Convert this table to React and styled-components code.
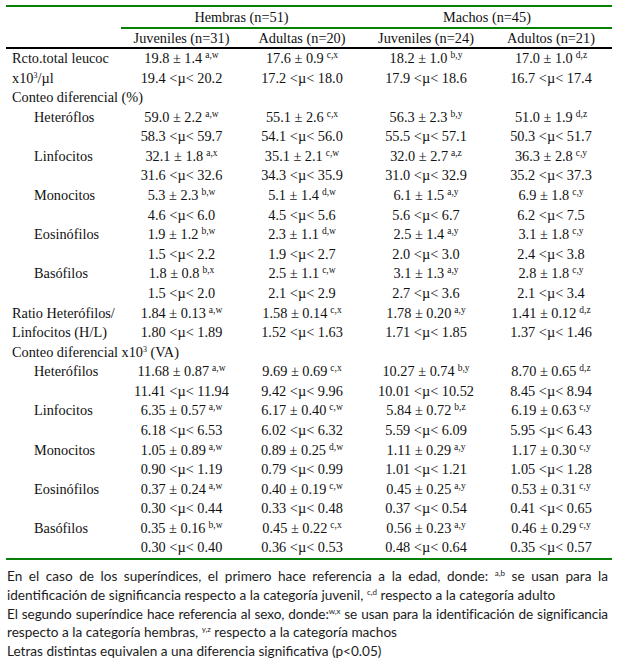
import React from "react";
import styled, { createGlobalStyle } from "styled-components";

const Global = createGlobalStyle`
  html, body { margin: 0; padding: 0; background: #ffffff; }
  body { font-family: "Liberation Serif", "Times New Roman", serif; color: #111; }
`;

const GREEN = "#088008";
const COLS = "115px 121px 120px 128px 122px";
const ROW_H = "19.58px";

const Page = styled.div`
  width: 619px;
  height: 659px;
  padding: 5px 7px 0 6px;
  box-sizing: border-box;
  overflow: hidden;
`;

const Table = styled.div`
  width: 606px;
  font-family: "Liberation Serif", "Times New Roman", serif;
  font-size: 14.3px;
  color: #111;
`;

const Rule = styled.div`
  height: 2px;
  background: ${(p) => (p.$black ? "#000" : GREEN)};
  margin-left: ${(p) => p.$indent || 0}px;
`;

const Row = styled.div`
  display: grid;
  grid-template-columns: ${COLS};
  height: ${(p) => p.$h || ROW_H};
  line-height: ${(p) => p.$h || ROW_H};
  white-space: nowrap;
`;

const GroupHeading = styled.div`
  grid-column: span 2;
  text-align: center;
`;

const HeadCell = styled.div`
  text-align: center;
`;

const Label = styled.div`
  padding-left: ${(p) => (p.$sub ? 28 : 6)}px;
  grid-column: ${(p) => (p.$wide ? "span 5" : "auto")};
`;

const Cell = styled.div`
  text-align: center;
`;

const Sup = styled.sup`
  font-size: 9.5px;
  line-height: 0;
  vertical-align: 5px;
  margin-left: 3px;
`;

const SmallSup = styled.sup`
  font-size: 8px;
  line-height: 0;
  vertical-align: 5px;
`;

const Notes = styled.div`
  margin-top: 7px;
  width: 601px;
  padding-left: 1px;
  font-family: "Lato", "Open Sans", sans-serif;
  font-size: 13.6px;
  color: #1c1c1c;
`;

const NoteLine = styled.div`
  height: 18.8px;
  line-height: 18.8px;
  white-space: nowrap;
  letter-spacing: ${(p) => (p.$tight ? "-0.12px" : "0")};
  text-align: ${(p) => (p.$justify ? "justify" : "left")};
  text-align-last: ${(p) => (p.$justify ? "justify" : "left")};
`;

const MU = "\u00b5";

const groups = [
  {
    label: ["Rcto.total leucoc", <>x10<SmallSup>3</SmallSup>/{MU}l</>],
    sub: false,
    data: [
      ["19.8 ± 1.4", "a,w", "19.4", "20.2"],
      ["17.6 ± 0.9", "c,x", "17.2", "18.0"],
      ["18.2 ± 1.0", "b,y", "17.9", "18.6"],
      ["17.0 ± 1.0", "d,z", "16.7", "17.4"],
    ],
  },
  { heading: "Conteo diferencial (%)" },
  {
    label: ["Heteróflos", ""],
    sub: true,
    data: [
      ["59.0 ± 2.2", "a,w", "58.3", "59.7"],
      ["55.1 ± 2.6", "c,x", "54.1", "56.0"],
      ["56.3 ± 2.3", "b,y", "55.5", "57.1"],
      ["51.0 ± 1.9", "d,z", "50.3", "51.7"],
    ],
  },
  {
    label: ["Linfocitos", ""],
    sub: true,
    data: [
      ["32.1 ± 1.8", "a,x", "31.6", "32.6"],
      ["35.1 ± 2.1", "c,w", "34.3", "35.9"],
      ["32.0 ± 2.7", "a,z", "31.0", "32.9"],
      ["36.3 ± 2.8", "c,y", "35.2", "37.3"],
    ],
  },
  {
    label: ["Monocitos", ""],
    sub: true,
    data: [
      ["5.3 ± 2.3", "b,w", "4.6", "6.0"],
      ["5.1 ± 1.4", "d,w", "4.5", "5.6"],
      ["6.1 ± 1.5", "a,y", "5.6", "6.7"],
      ["6.9 ± 1.8", "c,y", "6.2", "7.5"],
    ],
  },
  {
    label: ["Eosinófilos", ""],
    sub: true,
    data: [
      ["1.9 ± 1.2", "b,w", "1.5", "2.2"],
      ["2.3 ± 1.1", "d,w", "1.9", "2.7"],
      ["2.5 ± 1.4", "a,y", "2.0", "3.0"],
      ["3.1 ± 1.8", "c,y", "2.4", "3.8"],
    ],
  },
  {
    label: ["Basófilos", ""],
    sub: true,
    data: [
      ["1.8 ± 0.8", "b,x", "1.5", "2.0"],
      ["2.5 ± 1.1", "c,w", "2.1", "2.9"],
      ["3.1 ± 1.3", "a,y", "2.7", "3.6"],
      ["2.8 ± 1.8", "c,y", "2.1", "3.4"],
    ],
  },
  {
    label: ["Ratio Heterófilos/", "Linfocitos (H/L)"],
    sub: false,
    data: [
      ["1.84 ± 0.13", "a,w", "1.80", "1.89"],
      ["1.58 ± 0.14", "c,x", "1.52", "1.63"],
      ["1.78 ± 0.20", "a,y", "1.71", "1.85"],
      ["1.41 ± 0.12", "d,z", "1.37", "1.46"],
    ],
  },
  { heading: <>Conteo diferencial x10<SmallSup>3</SmallSup> (VA)</> },
  {
    label: ["Heterófilos", ""],
    sub: true,
    data: [
      ["11.68 ± 0.87", "a,w", "11.41", "11.94"],
      ["9.69 ± 0.69", "c,x", "9.42", "9.96"],
      ["10.27 ± 0.74", "b,y", "10.01", "10.52"],
      ["8.70 ± 0.65", "d,z", "8.45", "8.94"],
    ],
  },
  {
    label: ["Linfocitos", ""],
    sub: true,
    data: [
      ["6.35 ± 0.57", "a,w", "6.18", "6.53"],
      ["6.17 ± 0.40", "c,w", "6.02", "6.32"],
      ["5.84 ± 0.72", "b,z", "5.59", "6.09"],
      ["6.19 ± 0.63", "c,y", "5.95", "6.43"],
    ],
  },
  {
    label: ["Monocitos", ""],
    sub: true,
    data: [
      ["1.05 ± 0.89", "a,w", "0.90", "1.19"],
      ["0.89 ± 0.25", "d,w", "0.79", "0.99"],
      ["1.11 ± 0.29", "a,y", "1.01", "1.21"],
      ["1.17 ± 0.30", "c,y", "1.05", "1.28"],
    ],
  },
  {
    label: ["Eosinófilos", ""],
    sub: true,
    data: [
      ["0.37 ± 0.24", "a,w", "0.30", "0.44"],
      ["0.40 ± 0.19", "c,w", "0.33", "0.48"],
      ["0.45 ± 0.25", "a,y", "0.37", "0.54"],
      ["0.53 ± 0.31", "c,y", "0.41", "0.65"],
    ],
  },
  {
    label: ["Basófilos", ""],
    sub: true,
    data: [
      ["0.35 ± 0.16", "b,w", "0.30", "0.40"],
      ["0.45 ± 0.22", "c,x", "0.36", "0.53"],
      ["0.56 ± 0.23", "a,y", "0.48", "0.64"],
      ["0.46 ± 0.29", "c,y", "0.35", "0.57"],
    ],
  },
];

function Group({ g }) {
  if (g.heading) {
    return (
      <Row>
        <Label $wide>{g.heading}</Label>
      </Row>
    );
  }
  return (
    <>
      <Row>
        <Label $sub={g.sub}>{g.label[0]}</Label>
        {g.data.map((d, i) => (
          <Cell key={i}>
            {d[0]}
            <Sup>{d[1]}</Sup>
          </Cell>
        ))}
      </Row>
      <Row>
        <Label $sub={g.sub}>{g.label[1]}</Label>
        {g.data.map((d, i) => (
          <Cell key={i}>
            {d[2]} &lt;{MU}&lt; {d[3]}
          </Cell>
        ))}
      </Row>
    </>
  );
}

export default function App() {
  return (
    <>
      <Global />
      <Page>
        <Table>
          <Rule />
          <Row $h="20px">
            <div />
            <GroupHeading>Hembras (n=51)</GroupHeading>
            <GroupHeading>Machos (n=45)</GroupHeading>
          </Row>
          <Rule $indent={115} />
          <Row $h="18px">
            <div />
            <HeadCell>Juveniles (n=31)</HeadCell>
            <HeadCell>Adultas (n=20)</HeadCell>
            <HeadCell>Juveniles (n=24)</HeadCell>
            <HeadCell>Adultos (n=21)</HeadCell>
          </Row>
          <Rule $black />
          {groups.map((g, i) => (
            <Group key={i} g={g} />
          ))}
          <Rule />
        </Table>
        <Notes>
          <NoteLine $justify>
            En el caso de los superíndices, el primero hace referencia a la edad, donde: <SmallSup>a,b</SmallSup> se usan para la
          </NoteLine>
          <NoteLine>
            identificación de significancia respecto a la categoría juvenil, <SmallSup>c,d</SmallSup> respecto a la categoría adulto
          </NoteLine>
          <NoteLine $justify $tight>
            El segundo superíndice hace referencia al sexo, donde:<SmallSup>w,x</SmallSup> se usan para la identificación de significancia
          </NoteLine>
          <NoteLine>
            respecto a la categoría hembras, <SmallSup>y,z</SmallSup> respecto a la categoría machos
          </NoteLine>
          <NoteLine>Letras distintas equivalen a una diferencia significativa (p&lt;0.05)</NoteLine>
        </Notes>
      </Page>
    </>
  );
}
